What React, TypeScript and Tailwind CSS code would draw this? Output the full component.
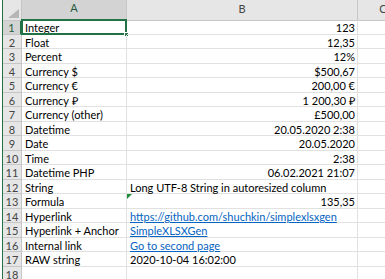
import React from "react";

type Align = "left" | "right" | "link";

type SheetRow = {
	label: string;
	value: string;
	align: Align;
	formula?: boolean;
};

const rows: SheetRow[] = [
	{ label: "Integer", value: "123", align: "right" },
	{ label: "Float", value: "12,35", align: "right" },
	{ label: "Percent", value: "12%", align: "right" },
	{ label: "Currency $", value: "$500,67", align: "right" },
	{ label: "Currency €", value: "200,00 €", align: "right" },
	{ label: "Currency ₽", value: "1 200,30 ₽", align: "right" },
	{ label: "Currency (other)", value: "£500,00", align: "right" },
	{ label: "Datetime", value: "20.05.2020 2:38", align: "right" },
	{ label: "Date", value: "20.05.2020", align: "right" },
	{ label: "Time", value: "2:38", align: "right" },
	{ label: "Datetime PHP", value: "06.02.2021 21:07", align: "right" },
	{ label: "String", value: "Long UTF-8 String in autoresized column", align: "left" },
	{ label: "Formula", value: "135,35", align: "right", formula: true },
	{ label: "Hyperlink", value: "https://github.com/shuchkin/simplexlsxgen", align: "link" },
	{ label: "Hyperlink + Anchor", value: "SimpleXLSXGen", align: "link" },
	{ label: "Internal link", value: "Go to second page", align: "link" },
	{ label: "RAW string", value: "2020-10-04 16:02:00", align: "left" },
	{ label: "", value: "", align: "left" },
];

const cols = "grid grid-cols-[19px_105px_231px_50px]";

function HeaderRow() {
	return (
		<div className={`${cols} shrink-0 h-[20px] bg-[#e6e6e6] text-[11px] text-[#444]`}>
			<div className="relative border-r border-b border-[#c6c6c6]">
				{/* select-all corner */}
				<svg className="absolute right-[2px] bottom-[2px]" width="11" height="9" viewBox="0 0 11 9">
					<polygon points="11,0 11,9 0,9" fill="#b6b6b6" />
				</svg>
			</div>
			<div className="flex items-end justify-center pb-[2px] bg-[#d3d3d3] border-r border-[#c6c6c6] border-b-2 border-b-[#217346] text-[#1f5c3a]">
				A
			</div>
			<div className="flex items-end justify-center pb-[2px] border-r border-b border-[#c6c6c6]">
				B
			</div>
			<div className="flex items-end justify-center pb-[2px] border-b border-[#c6c6c6]">
				C
			</div>
		</div>
	);
}

function Row({ row, index }: { row: SheetRow; index: number }) {
	const selected = index === 0;
	return (
		<div className={`${cols} shrink-0 h-[14.5px] text-[11px] leading-none`}>
			<div
				className={`flex items-center justify-center pt-[2px] border-b ${
					selected
						? "bg-[#d3d3d3] text-[#1f5c3a] border-r-2 border-r-[#217346] border-b-[#c6c6c6]"
						: "bg-[#e6e6e6] text-[#444] border-r border-[#c6c6c6]"
				}`}
			>
				{index + 1}
			</div>
			<div className="relative flex items-center pt-[2px] pl-[3px] border-r border-b border-[#e1e1e1] text-black whitespace-nowrap">
				{row.label}
				{selected && (
					<>
						<div className="absolute -left-px -top-px -right-px -bottom-px border-2 border-[#217346]" />
						<div className="absolute -right-[3px] -bottom-[3px] w-[5px] h-[5px] bg-[#217346] border border-white" />
					</>
				)}
			</div>
			<div
				className={`relative flex items-center pt-[2px] border-r border-b border-[#e1e1e1] whitespace-nowrap ${
					row.align === "right" ? "justify-end pr-[2px] text-black" : "pl-[3px] text-black"
				}`}
			>
				{row.formula && (
					<svg className="absolute left-0 top-0" width="5" height="5" viewBox="0 0 5 5">
						<polygon points="0,0 5,0 0,5" fill="#1e8c3a" />
					</svg>
				)}
				{row.align === "link" ? (
					<span className="text-[#0563c1] underline underline-offset-1">{row.value}</span>
				) : (
					row.value
				)}
			</div>
			<div className="border-b border-[#e1e1e1]" />
		</div>
	);
}

export default function App() {
	return (
		<div
			className="w-[385px] h-[279px] overflow-hidden bg-white flex"
			style={{ fontFamily: "Lato, 'Liberation Sans', sans-serif" }}
		>
			<div className="w-[2px] shrink-0 bg-white" />
			<div className="w-px shrink-0 bg-[#217346]" />
			<div className="flex flex-col">
				<HeaderRow />
				{rows.map((row, i) => (
					<Row key={i} row={row} index={i} />
				))}
			</div>
		</div>
	);
}
